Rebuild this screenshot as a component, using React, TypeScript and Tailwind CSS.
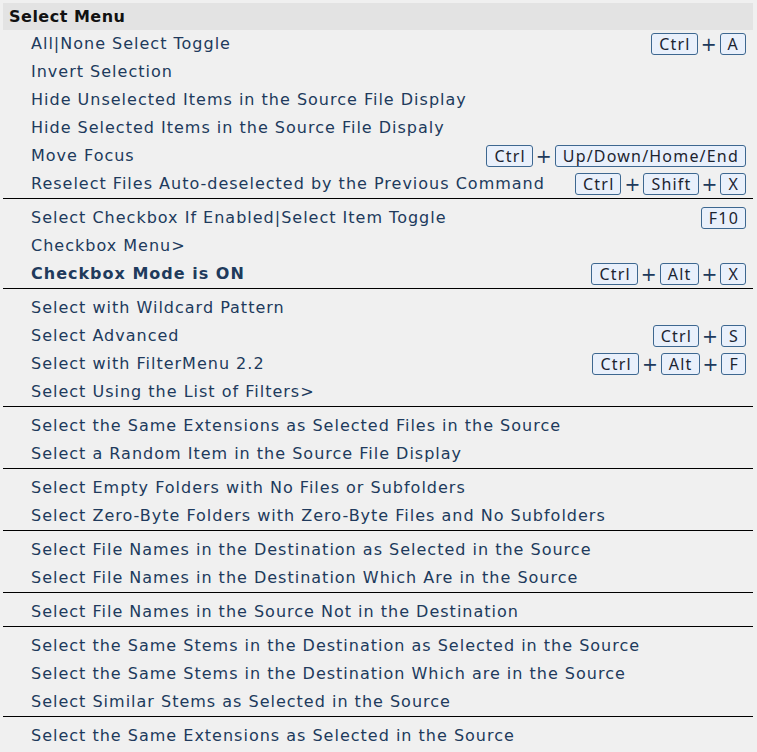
import React from 'react';

type Item = { label: string; keys?: string[]; bold?: boolean };

const groups: Item[][] = [
  [
    { label: 'All|None Select Toggle', keys: ['Ctrl', 'A'] },
    { label: 'Invert Selection' },
    { label: 'Hide Unselected Items in the Source File Display' },
    { label: 'Hide Selected Items in the Source File Dispaly' },
    { label: 'Move Focus', keys: ['Ctrl', 'Up/Down/Home/End'] },
    { label: 'Reselect Files Auto-deselected by the Previous Command', keys: ['Ctrl', 'Shift', 'X'] },
  ],
  [
    { label: 'Select Checkbox If Enabled|Select Item Toggle', keys: ['F10'] },
    { label: 'Checkbox Menu>' },
    { label: 'Checkbox Mode is ON', keys: ['Ctrl', 'Alt', 'X'], bold: true },
  ],
  [
    { label: 'Select with Wildcard Pattern' },
    { label: 'Select Advanced', keys: ['Ctrl', 'S'] },
    { label: 'Select with FilterMenu 2.2', keys: ['Ctrl', 'Alt', 'F'] },
    { label: 'Select Using the List of Filters>' },
  ],
  [
    { label: 'Select the Same Extensions as Selected Files in the Source' },
    { label: 'Select a Random Item in the Source File Display' },
  ],
  [
    { label: 'Select Empty Folders with No Files or Subfolders' },
    { label: 'Select Zero-Byte Folders with Zero-Byte Files and No Subfolders' },
  ],
  [
    { label: 'Select File Names in the Destination as Selected in the Source' },
    { label: 'Select File Names in the Destination Which Are in the Source' },
  ],
  [{ label: 'Select File Names in the Source Not in the Destination' }],
  [
    { label: 'Select the Same Stems in the Destination as Selected in the Source' },
    { label: 'Select the Same Stems in the Destination Which are in the Source' },
    { label: 'Select Similar Stems as Selected in the Source' },
  ],
  [{ label: 'Select the Same Extensions as Selected in the Source' }],
];

function Keys({ keys }: { keys: string[] }) {
  return (
    <div className="flex items-center">
      {keys.map((k, i) => (
        <React.Fragment key={i}>
          {i > 0 && <span className="mx-[3px] text-[#203a5c] text-[19px] leading-none">+</span>}
          <span className="h-[22px] pl-[7px] pr-[6px] flex items-center border border-[#3d6790] rounded-[3px] bg-[#e9f0fb] text-[#1c2430] text-[16px] tracking-[1.2px] leading-none font-['Noto_Sans',sans-serif]">
            {k}
          </span>
        </React.Fragment>
      ))}
    </div>
  );
}

export default function App() {
  return (
    <div className="min-h-[752px] w-[757px] bg-[#f0f0f0] pt-[3px] pl-[3px] pr-[4px] font-['DejaVu_Sans','Verdana',sans-serif]">
      <div className="h-[27px] bg-[#e3e3e3] pl-[6px] flex items-center text-[16px] tracking-[0.5px] font-bold text-[#111]">Select Menu</div>
      {groups.map((g, gi) => (
        <div key={gi} className={gi > 0 ? 'border-t border-black pt-[5px]' : ''}>
          {g.map((it, i) => (
            <div key={i} className="h-[28px] flex items-center justify-between pl-[28px] pr-[7px]">
              <span className={`text-[16px] tracking-[1px] text-[#203a5c] ${it.bold ? 'font-bold' : ''}`}>{it.label}</span>
              {it.keys && <Keys keys={it.keys} />}
            </div>
          ))}
        </div>
      ))}
    </div>
  );
}
